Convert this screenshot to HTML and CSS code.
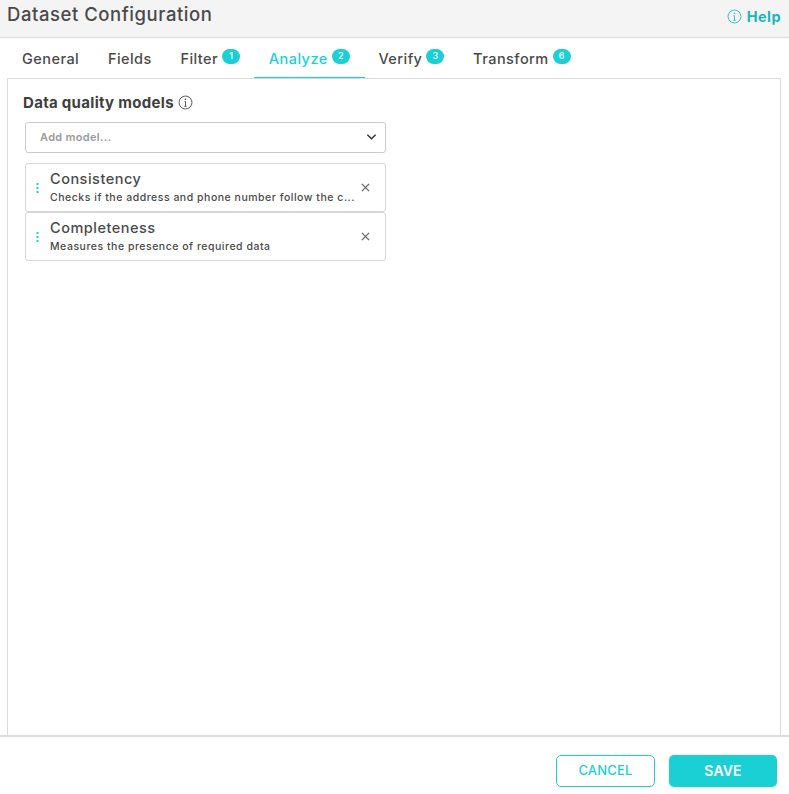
FILE: index.html
```html
<!DOCTYPE html>
<html lang="en">
<head>
  <meta charset="UTF-8">
  <title>Dataset Configuration</title>
  <link rel="stylesheet" href="styles.css">
</head>
<body>
  <div class="page">
    <header class="header">
      <h1 class="header-title">Dataset Configuration</h1>
      <a class="help-link">
        <svg class="info-icon" viewBox="0 0 16 16"><circle cx="8" cy="8" r="6.9"/><path d="M8 7v5.2M6.8 12.2h2.4M6.9 7h1.1"/><circle class="info-dot" cx="7.9" cy="4.6" r=".8"/></svg>
        Help
      </a>
    </header>

    <nav class="tabs">
      <a class="tab">General</a>
      <a class="tab">Fields</a>
      <a class="tab">Filter<span class="count">1</span></a>
      <a class="tab active">Analyze<span class="count">2</span></a>
      <a class="tab">Verify<span class="count">3</span></a>
      <a class="tab">Transform<span class="count">6</span></a>
    </nav>

    <main class="panel">
      <h2 class="section-title">
        Data quality models
        <svg class="info-icon" viewBox="0 0 16 16"><circle cx="8" cy="8" r="6.9"/><path d="M8 7v5.2M6.8 12.2h2.4M6.9 7h1.1"/><circle class="info-dot" cx="7.9" cy="4.6" r=".8"/></svg>
      </h2>

      <div class="select">
        <span>Add model...</span>
        <svg class="chevron" viewBox="0 0 12 8"><path d="M1.5 1.5 6 6l4.5-4.5"/></svg>
      </div>

      <ul class="models">
        <li class="model">
          <svg class="drag" viewBox="0 0 3 10"><path d="M0.5 0h2v2h-2zM0.5 4h2v2h-2zM0.5 8h2v2h-2z"/></svg>
          <div class="model-text">
            <div class="model-name">Consistency</div>
            <div class="model-desc">Checks if the address and phone number follow the c...</div>
          </div>
          <svg class="close" viewBox="0 0 10 10"><path d="M1 1l8 8M9 1 1 9"/></svg>
        </li>
        <li class="model">
          <svg class="drag" viewBox="0 0 3 10"><path d="M0.5 0h2v2h-2zM0.5 4h2v2h-2zM0.5 8h2v2h-2z"/></svg>
          <div class="model-text">
            <div class="model-name">Completeness</div>
            <div class="model-desc">Measures the presence of required data</div>
          </div>
          <svg class="close" viewBox="0 0 10 10"><path d="M1 1l8 8M9 1 1 9"/></svg>
        </li>
      </ul>
    </main>

    <footer class="footer">
      <button class="btn btn-cancel">CANCEL</button>
      <button class="btn btn-save">SAVE</button>
    </footer>
  </div>
</body>
</html>
```

FILE: styles.css
```css
* {
  margin: 0;
  padding: 0;
  box-sizing: border-box;
  font-family: 'Inter', 'Noto Sans', sans-serif;
}

body {
  background-color: #fff;
  color: #4a4a4a;
}

.page {
  display: flex;
  flex-direction: column;
  height: 794px;
}

.header {
  display: flex;
  align-items: flex-start;
  justify-content: space-between;
  height: 38px;
  padding: 2px 8px 0 7px;
  background-color: #f4f4f4;
  border-bottom: 1px solid #dcdcdc;
}

.header-title {
  font-size: 18.5px;
  font-weight: 500;
  line-height: 24px;
  letter-spacing: 0.55px;
}

.help-link {
  display: flex;
  align-items: center;
  gap: 5px;
  margin-top: 2px;
  height: 24px;
  color: #1ab5bd;
  font-size: 14.5px;
  font-weight: 700;
  letter-spacing: 0.45px;
}

.help-link .info-icon {
  width: 15px;
  height: 15px;
}

.info-icon {
  fill: none;
  stroke: currentColor;
  stroke-width: 0.9;
}

.info-dot {
  fill: currentColor;
  stroke: none;
}

.tabs {
  display: flex;
  height: 40px;
  padding-left: 7px;
}

.tab {
  display: flex;
  align-items: flex-start;
  padding: 12px 15px 0 15px;
  margin-right: -1.3px;
  font-size: 14.5px;
  font-weight: 500;
  line-height: 18px;
  letter-spacing: 0.45px;
  color: #4a4a4a;
}

.tab.active {
  color: #1bd0d4;
  border-bottom: 1px solid #1bd0d4;
}

.count {
  display: block;
  min-width: 18px;
  height: 15px;
  margin: -1px 0 0 4px;
  padding: 0 5px;
  border-radius: 8px;
  background-color: #1bd0d4;
  color: #fff;
  font-size: 9px;
  line-height: 14px;
  letter-spacing: 0;
  text-align: center;
}

.panel {
  flex: 1;
  margin: 0 8px 0 7px;
  padding: 14px 15px;
  border: 1px solid #dcdcdc;
  border-bottom: 0;
}

.section-title {
  display: flex;
  align-items: center;
  gap: 4px;
  height: 18px;
  font-size: 15px;
  font-weight: 700;
  letter-spacing: 0.3px;
  color: #3f3f3f;
}

.section-title .info-icon {
  width: 15px;
  height: 15px;
}

.select {
  display: flex;
  align-items: center;
  justify-content: space-between;
  width: 361px;
  height: 31px;
  margin: 11px 0 10px 2px;
  padding: 0 8px 2px 14px;
  border: 1px solid #ccc;
  border-radius: 3px;
  font-size: 11px;
  font-weight: 600;
  letter-spacing: 0.3px;
  color: #9b9b9b;
}

.chevron {
  width: 11px;
  height: 8px;
  fill: none;
  stroke: #333;
  stroke-width: 1.6;
}

.models {
  list-style: none;
  margin-left: 2px;
  width: 361px;
}

.model {
  display: flex;
  align-items: center;
  height: 49px;
  border: 1px solid #d6d6d6;
  border-radius: 3px;
}

.drag {
  flex: none;
  width: 3px;
  height: 10px;
  margin-left: 10px;
  fill: #1bd0d4;
}

.model-text {
  flex: 1;
  margin: -1px 0 0 11px;
}

.model-name {
  font-size: 14.5px;
  font-weight: 500;
  line-height: 20px;
  letter-spacing: 0.5px;
}

.model-desc {
  margin-top: 2px;
  font-size: 10.5px;
  font-weight: 500;
  line-height: 14px;
  letter-spacing: 0.52px;
  white-space: nowrap;
}

.close {
  flex: none;
  width: 9px;
  height: 9px;
  margin-right: 15px;
  fill: none;
  stroke: #666;
  stroke-width: 1.4;
}

.footer {
  display: flex;
  justify-content: flex-end;
  gap: 14px;
  height: 59px;
  padding: 18px 12px 0 0;
  border-top: 2px solid #dcdcdc;
}

.btn {
  height: 32px;
  padding-bottom: 2px;
  border-radius: 5px;
  font-size: 13px;
  letter-spacing: 0.2px;
  cursor: pointer;
}

.btn-cancel {
  width: 99px;
  background-color: #fff;
  border: 1px solid #1bd0d4;
  color: #1bd0d4;
  font-weight: 500;
}

.btn-save {
  width: 108px;
  background-color: #1bd0d4;
  border: none;
  color: #fff;
  font-size: 14px;
  font-weight: 600;
}
```
